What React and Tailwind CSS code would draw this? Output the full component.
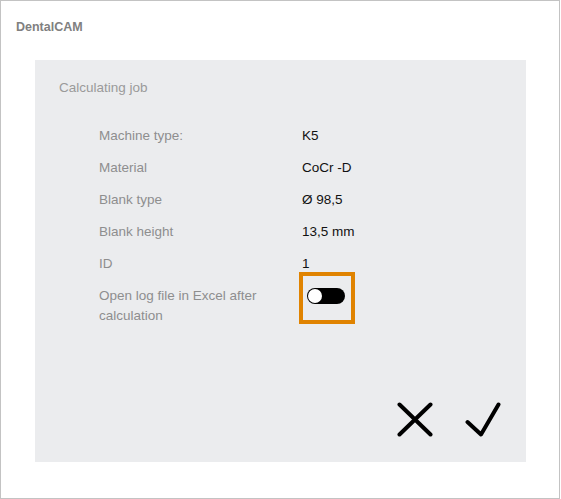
import React from "react";

const rows = [
  ["Machine type:", "K5"],
  ["Material", "CoCr -D"],
  ["Blank type", "Ø 98,5"],
  ["Blank height", "13,5 mm"],
  ["ID", "1"],
];

export default function App() {
  return (
    <div
      className="w-[560px] h-[499px] border border-[#c3c3c3] bg-white flex flex-col"
      style={{ fontFamily: '"Liberation Sans", Arial, sans-serif' }}
    >
      <div className="pl-[15px] pt-[19px] text-[12.5px] leading-[15px] font-bold text-[#808080]">
        DentalCAM
      </div>
      <div className="ml-[34px] mt-[25px] w-[491px] h-[402px] bg-[#ebecee] flex flex-col">
        <div className="pl-[24px] pt-[18px] text-[13.5px] leading-[20px] text-[#9a9a9a]">
          Calculating job
        </div>
        <div className="pl-[64px] pt-[28px] grid grid-cols-[203px_auto] gap-y-[12px] text-[13.5px] leading-[20px]">
          {rows.map(([l, v]) => (
            <React.Fragment key={l}>
              <div className="text-[#8e8e8e]">{l}</div>
              <div className="text-[#111]">{v}</div>
            </React.Fragment>
          ))}
          <div className="text-[#8e8e8e] pr-[20px]">Open log file in Excel after calculation</div>
          <div className="relative">
            <div className="absolute left-[-3px] top-[-14px] w-[56px] h-[52px] border-[4px] border-[#e08300]" />
            <div className="ml-[5px] mt-[2px] w-[38px] h-[16px] rounded-full bg-black relative">
              <div className="absolute left-[1px] top-[1px] w-[14px] h-[14px] rounded-full bg-white" />
            </div>
          </div>
        </div>
        <div className="mt-auto flex justify-end gap-[32px] pr-[25px] pb-[25px]">
          <svg width="36" height="35" viewBox="0 0 36 35" fill="none" stroke="black" strokeWidth="4" strokeLinecap="round">
            <path d="M2.5 2.5 L33.5 32.5 M33.5 2.5 L2.5 32.5" />
          </svg>
          <svg width="36" height="35" viewBox="0 0 36 35" fill="none" stroke="black" strokeWidth="4" strokeLinecap="round" strokeLinejoin="round">
            <path d="M2.5 20 L16 32.5 L33.5 2.5" />
          </svg>
        </div>
      </div>
    </div>
  );
}
